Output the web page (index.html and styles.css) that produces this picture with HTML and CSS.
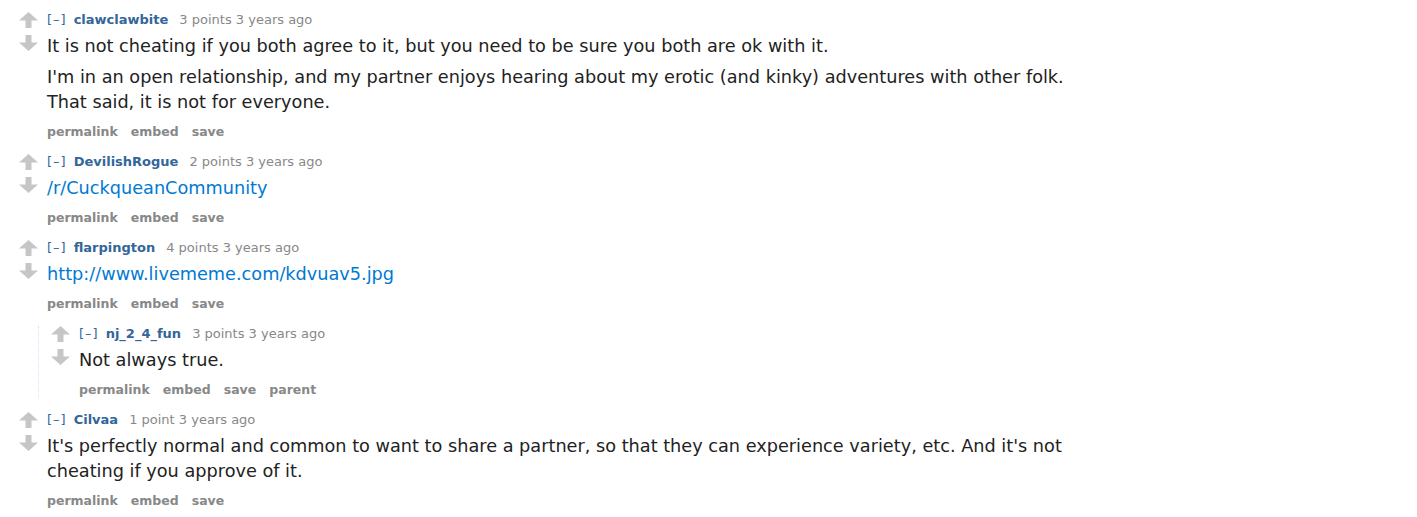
FILE: index.html
```html
<!DOCTYPE html>
<html>
<head>
<meta charset="utf-8">
<link rel="stylesheet" href="styles.css">
</head>
<body>
<div class="listing">
  <div class="comment">
    <div class="midcol">
      <svg class="arrow" viewBox="0 0 19 16"><path d="M9.5 0 L19 8.5 L12.5 8.5 L12.5 16 L6.5 16 L6.5 8.5 L0 8.5 Z"/></svg>
      <svg class="arrow" viewBox="0 0 19 16"><path d="M9.5 16 L19 7.5 L12.5 7.5 L12.5 0 L6.5 0 L6.5 7.5 L0 7.5 Z"/></svg>
    </div>
    <div class="entry">
      <p class="tagline"><a class="expand">[–]</a><a class="author">clawclawbite</a><span class="score">3 points</span> <span class="time">3 years ago</span></p>
      <div class="md">
        <p>It is not cheating if you both agree to it, but you need to be sure you both are ok with it.</p>
        <p>I'm in an open relationship, and my partner enjoys hearing about my erotic (and kinky) adventures with other folk. That said, it is not for everyone.</p>
      </div>
      <ul class="buttons"><li>permalink</li><li>embed</li><li>save</li></ul>
    </div>
  </div>

  <div class="comment">
    <div class="midcol">
      <svg class="arrow" viewBox="0 0 19 16"><path d="M9.5 0 L19 8.5 L12.5 8.5 L12.5 16 L6.5 16 L6.5 8.5 L0 8.5 Z"/></svg>
      <svg class="arrow" viewBox="0 0 19 16"><path d="M9.5 16 L19 7.5 L12.5 7.5 L12.5 0 L6.5 0 L6.5 7.5 L0 7.5 Z"/></svg>
    </div>
    <div class="entry">
      <p class="tagline"><a class="expand">[–]</a><a class="author">DevilishRogue</a><span class="score">2 points</span> <span class="time">3 years ago</span></p>
      <div class="md"><p><a class="link">/r/CuckqueanCommunity</a></p></div>
      <ul class="buttons"><li>permalink</li><li>embed</li><li>save</li></ul>
    </div>
  </div>

  <div class="comment">
    <div class="midcol">
      <svg class="arrow" viewBox="0 0 19 16"><path d="M9.5 0 L19 8.5 L12.5 8.5 L12.5 16 L6.5 16 L6.5 8.5 L0 8.5 Z"/></svg>
      <svg class="arrow" viewBox="0 0 19 16"><path d="M9.5 16 L19 7.5 L12.5 7.5 L12.5 0 L6.5 0 L6.5 7.5 L0 7.5 Z"/></svg>
    </div>
    <div class="entry">
      <p class="tagline"><a class="expand">[–]</a><a class="author">flarpington</a><span class="score">4 points</span> <span class="time">3 years ago</span></p>
      <div class="md"><p><a class="link">http://www.livememe.com/kdvuav5.jpg</a></p></div>
      <ul class="buttons"><li>permalink</li><li>embed</li><li>save</li></ul>
    </div>
    <div class="child">
      <div class="comment">
        <div class="midcol">
          <svg class="arrow" viewBox="0 0 19 16"><path d="M9.5 0 L19 8.5 L12.5 8.5 L12.5 16 L6.5 16 L6.5 8.5 L0 8.5 Z"/></svg>
          <svg class="arrow" viewBox="0 0 19 16"><path d="M9.5 16 L19 7.5 L12.5 7.5 L12.5 0 L6.5 0 L6.5 7.5 L0 7.5 Z"/></svg>
        </div>
        <div class="entry">
          <p class="tagline"><a class="expand">[–]</a><a class="author">nj_2_4_fun</a><span class="score">3 points</span> <span class="time">3 years ago</span></p>
          <div class="md"><p>Not always true.</p></div>
          <ul class="buttons"><li>permalink</li><li>embed</li><li>save</li><li>parent</li></ul>
        </div>
      </div>
    </div>
  </div>

  <div class="comment">
    <div class="midcol">
      <svg class="arrow" viewBox="0 0 19 16"><path d="M9.5 0 L19 8.5 L12.5 8.5 L12.5 16 L6.5 16 L6.5 8.5 L0 8.5 Z"/></svg>
      <svg class="arrow" viewBox="0 0 19 16"><path d="M9.5 16 L19 7.5 L12.5 7.5 L12.5 0 L6.5 0 L6.5 7.5 L0 7.5 Z"/></svg>
    </div>
    <div class="entry">
      <p class="tagline"><a class="expand">[–]</a><a class="author">Cilvaa</a><span class="score">1 point</span> <span class="time">3 years ago</span></p>
      <div class="md"><p>It's perfectly normal and common to want to share a partner, so that they can experience variety, etc. And it's not cheating if you approve of it.</p></div>
      <ul class="buttons"><li>permalink</li><li>embed</li><li>save</li></ul>
    </div>
  </div>
</div>
</body>
</html>
```

FILE: styles.css
```css
html, body {
  margin: 0;
  padding: 0;
  background: #fff;
}
body {
  font-family: "DejaVu Sans", Verdana, sans-serif;
  color: #222;
}
.listing {
  padding: 12px 0 0 18px;
}
.comment {
  display: grid;
  grid-template-columns: 20px 1fr;
  column-gap: 9px;
  margin-bottom: 14px;
}
.child .comment {
  margin-bottom: 0;
}
.midcol {
  display: flex;
  flex-direction: column;
  align-items: center;
  gap: 7px;
}
.arrow {
  width: 19px;
  height: 16px;
  fill: #c6c6c6;
  display: block;
}
.entry {
  min-width: 0;
}
.tagline {
  margin: 0;
  font-size: 13px;
  line-height: 16px;
  color: #888;
  white-space: nowrap;
}
.expand {
  color: #369;
  margin-right: 7px;
  letter-spacing: 1px;
}
.author {
  color: #369;
  font-weight: bold;
  margin-right: 11px;
}
.md {
  margin-top: 6px;
  max-width: 1040px;
  font-size: 17.7px;
  line-height: 25px;
  color: #222;
}
.md p {
  margin: 0 0 6px;
}
.md p:last-child {
  margin-bottom: 0;
}
.link {
  color: #0079d3;
}
.buttons {
  list-style: none;
  display: flex;
  gap: 13px;
  margin: 9px 0 0;
  padding: 0;
  font-size: 12.5px;
  line-height: 16px;
  font-weight: bold;
  color: #888;
}
.child {
  grid-column: 1 / -1;
  margin: 14px 0 0 20px;
  padding-left: 11px;
  border-left: 1px dotted #ddf;
}
```
